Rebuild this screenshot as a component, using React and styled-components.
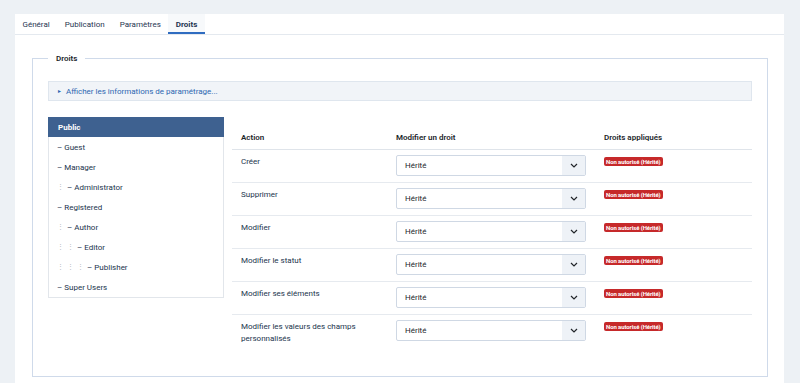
import React from "react";
import styled, { createGlobalStyle } from "styled-components";

const Global = createGlobalStyle`
  html, body { margin: 0; padding: 0; background: #edf1f5; }
  body { font-family: Roboto, "Liberation Sans", sans-serif; color: #22344d; -webkit-font-smoothing: antialiased; }
  * { box-sizing: border-box; }
`;

const Panel = styled.div`
  margin: 14px 16px 0 15px;
  background: #fff;
  height: 369px;
  display: flex;
  flex-direction: column;
`;

const TabBar = styled.div`
  display: flex;
  height: 21px;
  border-bottom: 1px solid #e4e9ef;
`;

const Tab = styled.div`
  padding: 0 7.5px;
  display: flex;
  align-items: center;
  font-size: 8px;
  font-weight: ${(p) => (p.$active ? 700 : 400)};
  color: #1f3552;
  background: ${(p) => (p.$active ? "#f7f9fb" : "transparent")};
  box-shadow: ${(p) => (p.$active ? "inset 0 -2px 0 #2f6cc0" : "none")};
`;

const Body = styled.div`
  padding: 19px 16px 0 17px;
`;

const Fieldset = styled.fieldset`
  margin: 0;
  border: 1px solid #cfdaea;
  padding: 18px 15px 24px 15px;
  height: 323px;
  min-width: 0;
`;

const Legend = styled.legend`
  padding: 0 8px;
  margin-left: 0;
  font-size: 8px;
  font-weight: 600;
  color: #22262a;
`;

const InfoBox = styled.div`
  height: 20px;
  background: #f1f4f8;
  border: 1px solid #dfe6ee;
  display: flex;
  align-items: center;
  padding-left: 8px;
  font-size: 8px;
  color: #2d67b1;
  gap: 4px;
`;

const Arrow = styled.span`
  font-size: 5px;
  line-height: 1;
`;

const Main = styled.div`
  display: flex;
  gap: 8px;
  margin-top: 16px;
  align-items: flex-start;
`;

const Tree = styled.div`
  width: 176px;
  border: 1px solid #e2e6eb;
  border-top: none;
  flex-shrink: 0;
`;

const TreeHead = styled.div`
  height: 20px;
  margin: 0 -1px;
  background: #3e6190;
  color: #fff;
  font-size: 8px;
  font-weight: 700;
  display: flex;
  align-items: center;
  padding-left: 10px;
`;

const TreeItem = styled.div`
  height: 20px;
  display: flex;
  align-items: center;
  padding-left: 8px;
  font-size: 8px;
  font-weight: 400;
  color: #22344d;
`;

const Guide = styled.span`
  width: 10px;
  color: #b3b9c2;
  font-size: 7px;
  flex-shrink: 0;
`;

const Dash = styled.span`
  margin-right: 2px;
`;

const Table = styled.div`
  flex: 1;
  display: grid;
  grid-template-columns: 155px 208px 1fr;
`;

const HeadCell = styled.div`
  font-size: 8px;
  font-weight: 600;
  color: #22262a;
  padding: 16px 9px 7px;
  border-bottom: 1px solid #dfe4ea;
`;

const Cell = styled.div`
  padding: ${(p) => (p.$label ? "6px 9px 5px" : "5px 9px 6px")};
  border-bottom: ${(p) => (p.$last ? "none" : "1px solid #e6eaef")};
  font-size: 8px;
  line-height: 12px;
  color: #22344d;
`;

const Select = styled.div`
  height: 21px;
  width: 190px;
  border: 1px solid #cfd8e4;
  border-radius: 2px;
  display: flex;
  align-items: stretch;
  background: #fff;
`;

const SelectValue = styled.div`
  flex: 1;
  display: flex;
  align-items: center;
  padding-left: 8px;
  font-size: 8px;
  color: #22262a;
`;

const SelectBtn = styled.div`
  width: 23px;
  background: #eef2f7;
  display: flex;
  align-items: center;
  justify-content: center;
`;

const Badge = styled.span`
  display: inline-block;
  background: #c6292a;
  color: #fff;
  font-size: 6px;
  font-weight: 700;
  line-height: 9px;
  padding: 0 2px;
  border-radius: 2px;
  margin-top: 2px;
  letter-spacing: -0.1px;
`;

const Chevron = () => (
  <svg width="8" height="5" viewBox="0 0 8 5">
    <path d="M1 1l3 3 3-3" fill="none" stroke="#22262a" strokeWidth="1.2" />
  </svg>
);

const groups = [
  { name: "Guest", level: 0 },
  { name: "Manager", level: 0 },
  { name: "Administrator", level: 1 },
  { name: "Registered", level: 0 },
  { name: "Author", level: 1 },
  { name: "Editor", level: 2 },
  { name: "Publisher", level: 3 },
  { name: "Super Users", level: 0 },
];

const actions = [
  "Créer",
  "Supprimer",
  "Modifier",
  "Modifier le statut",
  "Modifier ses éléments",
  "Modifier les valeurs des champs personnalisés",
];

export default function App() {
  return (
    <>
      <Global />
      <Panel>
        <TabBar>
          <Tab>Général</Tab>
          <Tab>Publication</Tab>
          <Tab>Paramètres</Tab>
          <Tab $active>Droits</Tab>
        </TabBar>
        <Body>
          <Fieldset>
            <Legend>Droits</Legend>
            <InfoBox>
              <Arrow>►</Arrow>
              <span>Afficher les informations de paramétrage...</span>
            </InfoBox>
            <Main>
              <Tree>
                <TreeHead>Public</TreeHead>
                {groups.map((g) => (
                  <TreeItem key={g.name}>
                    {Array.from({ length: g.level }).map((_, i) => (
                      <Guide key={i}>⋮</Guide>
                    ))}
                    <Dash>–</Dash>
                    {g.name}
                  </TreeItem>
                ))}
              </Tree>
              <Table>
                <HeadCell>Action</HeadCell>
                <HeadCell>Modifier un droit</HeadCell>
                <HeadCell>Droits appliqués</HeadCell>
                {actions.map((a, i) => {
                  const last = i === actions.length - 1;
                  return (
                    <React.Fragment key={a}>
                      <Cell $label $last={last}>{a}</Cell>
                      <Cell $last={last}>
                        <Select>
                          <SelectValue>Hérité</SelectValue>
                          <SelectBtn>
                            <Chevron />
                          </SelectBtn>
                        </Select>
                      </Cell>
                      <Cell $last={last}>
                        <Badge>Non autorisé (Hérité)</Badge>
                      </Cell>
                    </React.Fragment>
                  );
                })}
              </Table>
            </Main>
          </Fieldset>
        </Body>
      </Panel>
    </>
  );
}
